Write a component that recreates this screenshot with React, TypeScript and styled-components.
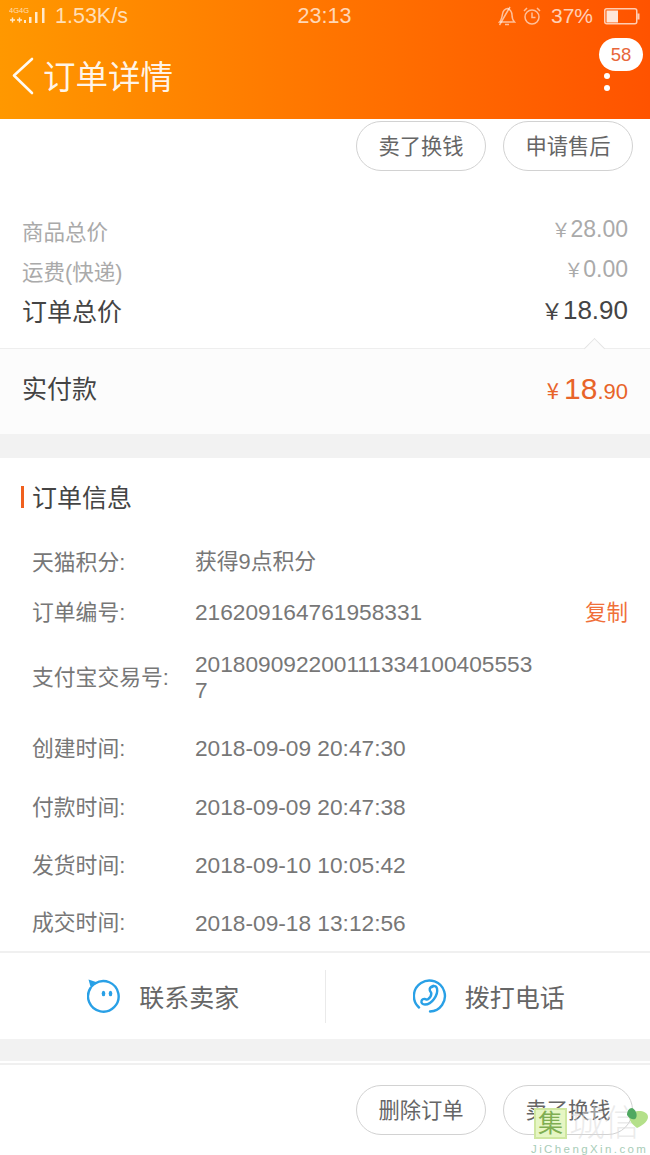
import React from "react";
import styled, { createGlobalStyle } from "styled-components";

const Global = createGlobalStyle`
  html, body { margin: 0; padding: 0; background: #fff; }
  body { font-family: "Liberation Sans", "Noto Sans CJK SC", sans-serif; }
  * { box-sizing: border-box; }
`;

const Page = styled.div`
  width: 650px; height: 1155px; overflow: hidden; position: relative; background: #fff;
  display: flex; flex-direction: column;
`;
const Header = styled.header`
  height: 119px; flex: none; color: #fff;
  background: linear-gradient(90deg, #ff9800 0%, #ff7500 50%, #ff5300 100%);
  display: flex; flex-direction: column;
`;
const StatusBar = styled.div`
  height: 34px; display: grid; grid-template-columns: 1fr auto 1fr; align-items: center;
  padding: 0 10px 2px 9px; color: rgba(255,255,255,.72); font-size: 21px;
`;
const StatusLeft = styled.div`display: flex; align-items: center; gap: 8px;`;
const StatusRight = styled.div`display: flex; align-items: center; justify-content: flex-end; gap: 7px;`;
const Speed = styled.span`font-size: 21.5px;`;
const Clock = styled.span`font-size: 21.5px;`;
const Percent = styled.span`font-size: 21px; margin: 0 4px 0 3px;`;
const Nav = styled.div`
  flex: 1; display: flex; align-items: flex-start; justify-content: space-between; padding: 0 7px 0 11px; position: relative;
`;
const NavTitle = styled.div`display: flex; align-items: center; gap: 8px; margin-top: 22px;`;
const TitleText = styled.span`font-size: 32.5px; line-height: 40px; color: rgba(255,255,255,.92); position: relative; top: 2px;`;
const Badge = styled.div`
  position: absolute; right: 7px; top: 4px; width: 44px; height: 33px; border-radius: 17px; background: #fff;
  color: #e8663a; font-size: 18.5px; display: flex; align-items: center; justify-content: center;
`;
const Dots = styled.div`
  position: absolute; right: 40px; top: 39px; display: flex; flex-direction: column; gap: 6px;
`;
const Dot = styled.i`display: block; width: 6px; height: 6px; border-radius: 50%; background: #fff;`;

const ActionRow = styled.div<{ $top: number }>`
  display: flex; justify-content: flex-end; gap: 17px; padding: ${p => p.$top}px 17px 0 0;
`;
const Pill = styled.div`
  width: 130px; height: 50px; border: 1px solid #d2d2d2; border-radius: 25px; background: transparent;
  color: #666; font-size: 21.3px; display: flex; align-items: center; justify-content: center; padding-bottom: 4px;
`;
const Prices = styled.section`
  padding: 39px 22px 0 22px; display: flex; flex-direction: column; height: 177px; flex: none;
`;
const PriceRow = styled.div<{ $h: number }>`
  height: ${p => p.$h}px; display: flex; align-items: center; justify-content: space-between;
`;
const PriceLabel = styled.span<{ $strong?: boolean }>`
  font-size: ${p => (p.$strong ? 25 : 21.5)}px; color: ${p => (p.$strong ? "#444" : "#aaa")};
`;
const PriceValue = styled.span<{ $strong?: boolean }>`
  font-size: ${p => (p.$strong ? 26 : 23)}px; color: ${p => (p.$strong ? "#444" : "#aaa")}; position: relative; top: -1px;
`;
const Yen = styled.span<{ $strong?: boolean }>`
  font-size: ${p => (p.$strong ? 22 : 19)}px; margin-right: 0; font-family: "Noto Sans CJK SC", sans-serif;
`;
const PaidBand = styled.div`
  height: 86px; flex: none; background: #fcfcfc; border-top: 1px solid #eee; position: relative;
  display: flex; align-items: center; justify-content: space-between; padding: 0 22px 10px 22px;
`;
const Notch = styled.i`
  position: absolute; right: 48px; top: -8px; width: 15px; height: 15px; background: #fcfcfc;
  border-left: 1px solid #e4e4e4; border-top: 1px solid #e4e4e4; transform: rotate(45deg);
`;
const PaidLabel = styled.span`font-size: 25px; color: #444;`;
const PaidValue = styled.span`color: #e8642a; display: flex; align-items: baseline; position: relative; top: 2px;`;
const PaidYen = styled.span`font-size: 22px; margin-right: 5px; font-family: "Noto Sans CJK SC", sans-serif;`;
const PaidInt = styled.span`font-size: 30px;`;
const PaidDec = styled.span`font-size: 22px;`;
const GrayGap = styled.div<{ $h: number }>`height: ${p => p.$h}px; flex: none; background: #f2f2f2;`;
const Info = styled.section`height: 495px; flex: none; display: flex; flex-direction: column; border-bottom: 2px solid #f0f0f0;`;
const InfoTitle = styled.div`
  margin: 28px 0 0 21px; height: 22px; display: flex; align-items: center; gap: 8px;
  color: #444; font-size: 25px; flex: none;
`;
const TitleBar = styled.i`display: block; width: 3px; height: 22px; background: #f0601e;`;
const InfoTitleText = styled.span`position: relative; top: -1px;`;
const InfoList = styled.div`margin-top: 28px; display: flex; flex-direction: column;`;
const InfoRow = styled.div<{ $h: number }>`
  height: ${p => p.$h}px; flex: none; display: flex; align-items: center; padding: 0 22px 0 32px; color: #777; font-size: 21.8px;
`;
const InfoLabel = styled.span`width: 163px; flex: none; white-space: nowrap; position: relative; top: -2px;`;
const InfoValue = styled.span<{ $cjk?: boolean }>`
  flex: 1; font-size: ${p => (p.$cjk ? 21.8 : 22.7)}px; line-height: 26px; word-break: break-all; max-width: 345px;
`;
const Copy = styled.span`margin-left: auto; color: #f0703a; font-size: 21.5px; position: relative; top: -2px;`;
const ContactBar = styled.div`height: 86px; flex: none; display: flex; align-items: center;`;
const ContactCell = styled.div<{ $divider?: boolean }>`
  flex: 1; height: 53px; display: flex; align-items: center; justify-content: center; gap: 18px; padding-left: 2px;
  color: #666; font-size: 25px; border-left: ${p => (p.$divider ? "1px solid #eaeaea" : "none")};
`;
const BottomLine = styled.div`height: 2px; flex: none; background: #f0f0f0; margin-top: 2px;`;
const Watermark = styled.div`position: absolute; left: 531px; top: 1107px; width: 119px; height: 48px;`;
const WatermarkBox = styled.div`
  position: absolute; left: 3px; top: 1px; width: 33px; height: 31px; background: #e6f6c4;
  border: 2px solid #cfe7a0; color: #7fae52; font-size: 25px; line-height: 26px; text-align: center;
`;
const WatermarkText = styled.div`
  position: absolute; left: 38px; top: -1px; font-size: 36px; line-height: 36px; color: rgba(215,215,215,.5); white-space: nowrap;
  font-weight: 300; letter-spacing: -1px;
`;
const WatermarkUrl = styled.div`
  position: absolute; left: 0; top: 36px; font-size: 11.5px; line-height: 13px; color: #a8cdb8; letter-spacing: 2.4px; white-space: nowrap;
`;

const Signal = () => (
  <svg width="38" height="20" viewBox="0 0 38 20" fill="none">
    <text x="0" y="7" fontSize="7.5" fill="rgba(255,255,255,.7)" fontFamily="Liberation Sans">4G4G</text>
    <path d="M1 14h5M3.5 11.5v5M8 14h5M10.500 11.500v5" stroke="rgba(255,255,255,.8)" strokeWidth="1.4" />
    <rect x="15" y="14" width="2" height="3" fill="rgba(255,255,255,.8)" />
    <rect x="20" y="11" width="2.500" height="6" fill="rgba(255,255,255,.8)" />
    <rect x="26" y="6" width="2.500" height="11" fill="rgba(255,255,255,.8)" />
    <rect x="33" y="2" width="2.500" height="15" fill="rgba(255,255,255,.8)" />
  </svg>
);
const BellOff = () => (
  <svg width="18" height="20" viewBox="0 0 18 20" fill="none" stroke="rgba(255,255,255,.6)" strokeWidth="1.5">
    <path d="M1.500 16h15c-2-2-2.500-4-2.500-7 0-3-2-6-4.500-6.500C7 3 5 5 4.500 8c-.5 3-1 6-3 8z" />
    <path d="M7 18.500h4M1.500 19L12 1" />
  </svg>
);
const Alarm = () => (
  <svg width="18" height="20" viewBox="0 0 18 20" fill="none" stroke="rgba(255,255,255,.6)" strokeWidth="1.5">
    <circle cx="9" cy="11" r="7" />
    <path d="M9 6.500V11.500H12.500M1 5l3-3M17 5l-3-3" />
  </svg>
);
const Battery = () => (
  <svg width="36" height="17" viewBox="0 0 36 17" fill="none">
    <rect x=".75" y=".75" width="32" height="15" rx="2" stroke="rgba(255,255,255,.7)" strokeWidth="1.500" />
    <rect x="2.500" y="2.500" width="11.500" height="12" fill="rgba(255,255,255,.85)" />
    <rect x="33.500" y="5.500" width="2" height="6" fill="rgba(255,255,255,.7)" />
  </svg>
);
const Back = () => (
  <svg width="24" height="40" viewBox="0 0 24 40" fill="none">
    <path d="M21 3L3 19.500 21 37" stroke="rgba(255,255,255,.95)" strokeWidth="2.600" strokeLinecap="round" strokeLinejoin="round" />
  </svg>
);
const ChatIcon = () => (
  <svg width="34" height="34" viewBox="0 0 34 34" fill="none">
    <path d="M8 4.500A15.300 15.300 0 1 1 3.500 9" stroke="#29a0e6" strokeWidth="2.400" strokeLinecap="round" />
    <path d="M1.500 .5L10.500 3.500 4 9.500z" fill="#29a0e6" />
    <ellipse cx="16.500" cy="14.500" rx="1.800" ry="2.800" fill="#29a0e6" />
    <ellipse cx="23.500" cy="14.500" rx="1.800" ry="2.800" fill="#29a0e6" />
  </svg>
);
const PhoneIcon = () => (
  <svg width="34" height="34" viewBox="0 0 34 34" fill="none" stroke="#29a0e6" strokeWidth="2.400" strokeLinecap="round">
    <path d="M6 28.500A15.500 15.500 0 1 1 17 32.500" />
    <path d="M20 7.500c2-1 3.500 0 4 2 .8 3.500-.5 7-3 10.500-2.500 3.500-6 5.500-9 5.500-2.500 0-4-1.500-3.500-3.500.4-1.600 2-2.500 3.500-2 1.400.4 2 1 3 .3 1.800-1.300 3.400-4 3.300-6-.1-1-1.200-1.500-1.500-3-.3-1.500.6-3.500 3.200-4.300z" />
  </svg>
);
const Leaf = () => (
  <svg width="24" height="24" viewBox="0 0 24 24" style={{ position: "absolute", left: 95, top: 0 }}>
    <path d="M3 9c0-4 3-6 6-4 3-2 13-1 13 5 0 5-7 9-11 11C7 18 3 14 3 9z" fill="#b4e08a" />
    <path d="M1 8c0-4 2-7 5-7 3 1 6 6 4 10-1 2-6 2-9-3z" fill="#4fa860" />
  </svg>
);

const infoRows = [
  { label: "天猫积分:", value: "获得9点积分", h: 52, cjk: true },
  { label: "订单编号:", value: "216209164761958331", h: 48, copy: true },
  { label: "支付宝交易号:", value: "2018090922001113341004055537", h: 82 },
  { label: "创建时间:", value: "2018-09-09 20:47:30", h: 60 },
  { label: "付款时间:", value: "2018-09-09 20:47:38", h: 58 },
  { label: "发货时间:", value: "2018-09-10 10:05:42", h: 58 },
  { label: "成交时间:", value: "2018-09-18 13:12:56", h: 57 },
];

export default function App() {
  return (
    <Page>
      <Global />
      <Header>
        <StatusBar>
          <StatusLeft><Signal /><Speed>1.53K/s</Speed></StatusLeft>
          <Clock>23:13</Clock>
          <StatusRight><BellOff /><Alarm /><Percent>37%</Percent><Battery /></StatusRight>
        </StatusBar>
        <Nav>
          <NavTitle><Back /><TitleText>订单详情</TitleText></NavTitle>
          <Badge>58</Badge>
          <Dots><Dot /><Dot /></Dots>
        </Nav>
      </Header>
      <ActionRow $top={2}><Pill>卖了换钱</Pill><Pill>申请售后</Pill></ActionRow>
      <Prices>
        <PriceRow $h={40}><PriceLabel>商品总价</PriceLabel><PriceValue><Yen>￥</Yen>28.00</PriceValue></PriceRow>
        <PriceRow $h={40}><PriceLabel>运费(快递)</PriceLabel><PriceValue><Yen>￥</Yen>0.00</PriceValue></PriceRow>
        <PriceRow $h={40}><PriceLabel $strong>订单总价</PriceLabel><PriceValue $strong><Yen $strong>￥</Yen>18.90</PriceValue></PriceRow>
      </Prices>
      <PaidBand>
        <Notch />
        <PaidLabel>实付款</PaidLabel>
        <PaidValue><PaidYen>¥</PaidYen><PaidInt>18</PaidInt><PaidDec>.90</PaidDec></PaidValue>
      </PaidBand>
      <GrayGap $h={24} />
      <Info>
        <InfoTitle><TitleBar /><InfoTitleText>订单信息</InfoTitleText></InfoTitle>
        <InfoList>
          {infoRows.map(r => (
            <InfoRow key={r.label} $h={r.h}>
              <InfoLabel>{r.label}</InfoLabel>
              <InfoValue $cjk={r.cjk}>{r.value}</InfoValue>
              {r.copy && <Copy>复制</Copy>}
            </InfoRow>
          ))}
        </InfoList>
      </Info>
      <ContactBar>
        <ContactCell><ChatIcon />联系卖家</ContactCell>
        <ContactCell $divider><PhoneIcon />拨打电话</ContactCell>
      </ContactBar>
      <GrayGap $h={22} />
      <BottomLine />
      <ActionRow $top={20}><Pill>删除订单</Pill><Pill>卖了换钱</Pill></ActionRow>
      <Watermark>
        <WatermarkBox>集</WatermarkBox>
        <WatermarkText>城信</WatermarkText>
        <Leaf />
        <WatermarkUrl>JiChengXin.com</WatermarkUrl>
      </Watermark>
    </Page>
  );
}
